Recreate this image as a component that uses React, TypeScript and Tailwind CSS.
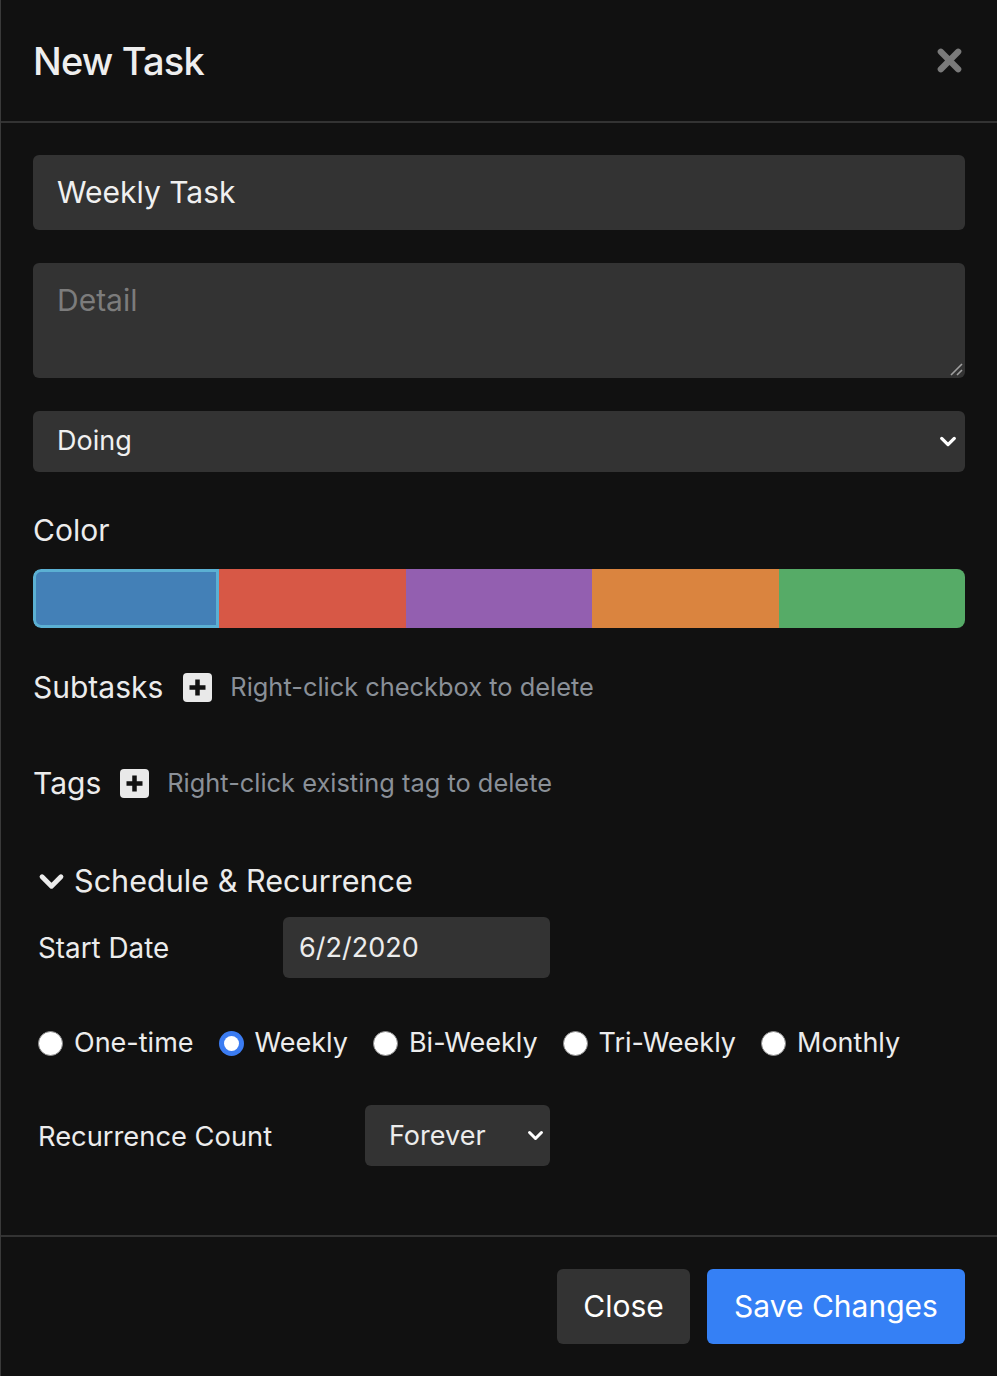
import React from "react";

const font = { fontFamily: "Inter, 'Noto Sans', 'Liberation Sans', sans-serif" };

function Chevron({ className }: { className?: string }) {
  return (
    <svg viewBox="0 0 20 12" className={className} fill="none">
      <path d="M3 2.5 L10 9.5 L17 2.5" stroke="currentColor" strokeWidth="3.6" strokeLinecap="round" strokeLinejoin="round" />
    </svg>
  );
}

function PlusSquare() {
  return (
    <svg viewBox="0 0 29 29" className="w-[29px] h-[29px]">
      <rect x="0" y="0" width="29" height="29" rx="4" fill="#e9e9e9" />
      <path d="M14.5 6.5 V22.5 M6.5 14.5 H22.5" stroke="#111" strokeWidth="4.5" />
    </svg>
  );
}

function Radio({ checked }: { checked?: boolean }) {
  if (checked)
    return (
      <span className="w-[25px] h-[25px] rounded-full bg-[#3b7cf2] flex items-center justify-center shrink-0">
        <span className="w-[15px] h-[15px] rounded-full bg-white" />
      </span>
    );
  return <span className="w-[25px] h-[25px] rounded-full bg-white border border-[#8a8a8a] shrink-0" />;
}

export default function App() {
  const radios = [
    { label: "One-time" },
    { label: "Weekly", checked: true },
    { label: "Bi-Weekly" },
    { label: "Tri-Weekly" },
    { label: "Monthly" },
  ];
  return (
    <div className="w-[997px] h-[1376px] bg-[#111111] border-l border-[#3a3a3a] text-[#ececec] flex flex-col" style={font}>
      {/* header */}
      <div className="h-[123px] border-b-2 border-[#333] flex items-center justify-between pl-[32px] pr-[34px] shrink-0">
        <div className="text-[38px] font-medium tracking-[-0.8px] text-[#eeeeee] leading-none">New Task</div>
        <svg viewBox="0 0 28 28" className="w-[27px] h-[27px]">
          <path d="M5 5 L23 23 M23 5 L5 23" stroke="#7a7a7a" strokeWidth="6.5" strokeLinecap="round" />
        </svg>
      </div>

      {/* body */}
      <div className="flex-1 flex flex-col px-[32px]">
        <div className="mt-[32px] h-[75px] bg-[#333333] rounded-[6px] flex items-center pl-[24px] text-[30px] text-[#f0f0f0]">
          Weekly Task
        </div>
        <div className="relative mt-[33px] h-[115px] bg-[#333333] rounded-[6px] pl-[24px] pt-[17px] text-[30px] text-[#7c7c7c] leading-[40px]">
          Detail
          <svg viewBox="0 0 14 14" className="absolute right-[2px] bottom-[2px] w-[14px] h-[14px]">
            <path d="M2 13 L13 2 M8 13 L13 8" stroke="#a0a0a0" strokeWidth="1.6" />
          </svg>
        </div>
        <div className="mt-[33px] h-[61px] bg-[#333333] rounded-[6px] flex items-center justify-between pl-[24px] pr-[8px] text-[27px] text-[#f0f0f0]">
          <span>Doing</span>
          <Chevron className="w-[18px] h-[11px] text-white" />
        </div>

        <div className="mt-[38px] h-[40px] leading-[40px] text-[30px] text-[#ececec]">Color</div>

        <div className="mt-[19px] h-[59px] grid grid-cols-5 rounded-[8px] overflow-hidden">
          <div className="bg-[#4380b7] border-[3px] border-[#5bb0d3] rounded-l-[8px]" />
          <div className="bg-[#d75846]" />
          <div className="bg-[#935fb0]" />
          <div className="bg-[#da843f]" />
          <div className="bg-[#56ab67]" />
        </div>

        <div className="mt-[39px] h-[40px] flex items-center">
          <span className="text-[30px] text-[#ececec]">Subtasks</span>
          <span className="ml-[20px]"><PlusSquare /></span>
          <span className="ml-[18px] text-[25.4px] text-[#8a9098]">Right-click checkbox to delete</span>
        </div>

        <div className="mt-[56px] h-[40px] flex items-center">
          <span className="text-[30px] text-[#ececec]">Tags</span>
          <span className="ml-[19px]"><PlusSquare /></span>
          <span className="ml-[18px] text-[25.4px] text-[#8a9098]">Right-click existing tag to delete</span>
        </div>

        <div className="mt-[58px] h-[40px] flex items-center pl-[5px]">
          <Chevron className="w-[27px] h-[17px] text-[#ececec]" />
          <span className="ml-[9px] text-[30.6px] text-[#ececec]">Schedule &amp; Recurrence</span>
        </div>

        <div className="mt-[16px] w-[517px] pl-[5px] h-[61px] flex items-center justify-between">
          <span className="text-[27.8px] text-[#ececec] pt-[3px]">Start Date</span>
          <div className="w-[267px] h-[61px] bg-[#333333] rounded-[6px] flex items-center pl-[16px] pt-[2px] text-[27px] text-[#ececec]">
            6/2/2020
          </div>
        </div>

        <div className="mt-[45px] h-[40px] flex items-center pl-[5px] gap-[25px]">
          {radios.map((r) => (
            <div key={r.label} className="flex items-center gap-[11px]">
              <Radio checked={r.checked} />
              <span className="text-[27px] text-[#ececec]">{r.label}</span>
            </div>
          ))}
        </div>

        <div className="mt-[42px] w-[517px] pl-[5px] h-[61px] flex items-center justify-between">
          <span className="text-[27.3px] text-[#ececec] pt-[3px]">Recurrence Count</span>
          <div className="w-[185px] h-[61px] bg-[#333333] rounded-[6px] flex items-center justify-between pl-[24px] pr-[6px] text-[27px] text-[#ececec]">
            <span className="pt-[2px]">Forever</span>
            <Chevron className="w-[17px] h-[11px] text-white" />
          </div>
        </div>
      </div>

      {/* footer */}
      <div className="h-[141px] border-t-2 border-[#333] flex items-center justify-end gap-[17px] pr-[32px] shrink-0">
        <div className="h-[75px] w-[133px] bg-[#333333] rounded-[6px] flex items-center justify-center text-[30px] text-white">
          Close
        </div>
        <div className="h-[75px] w-[258px] bg-[#3580f5] rounded-[6px] flex items-center justify-center text-[30px] text-white">
          Save Changes
        </div>
      </div>
    </div>
  );
}
